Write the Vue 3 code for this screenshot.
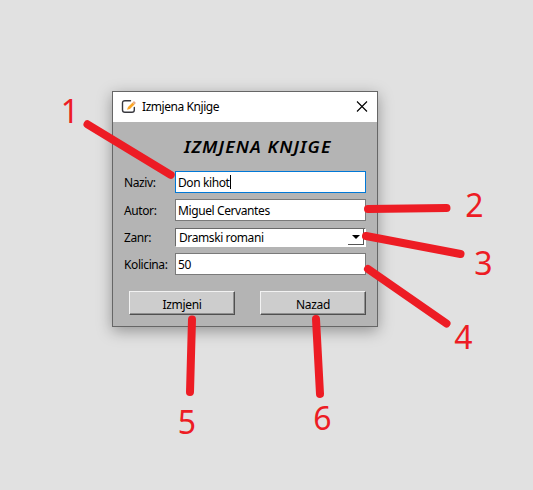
<script setup>
const lines = [
  { n: '1', x1: 87.5, y1: 124.3, x2: 170.7, y2: 174.8, tx: 70, ty: 122.6 },
  { n: '2', x1: 368, y1: 209, x2: 446.5, y2: 208, tx: 474.5, ty: 216.6 },
  { n: '3', x1: 366, y1: 236, x2: 460.5, y2: 254, tx: 483.5, ty: 274.6 },
  { n: '4', x1: 368, y1: 269, x2: 446.5, y2: 323.5, tx: 463.5, ty: 348.6 },
  { n: '5', x1: 192, y1: 319.5, x2: 190, y2: 392, tx: 187, ty: 433.6 },
  { n: '6', x1: 316, y1: 319, x2: 320, y2: 394, tx: 322.5, ty: 429.6 },
]
</script>

<template>
  <main class="desktop">
    <section class="window">
      <header class="titlebar">
        <svg class="app-icon" width="16" height="16" viewBox="0 0 16 16">
          <path d="M9.5 1.7H4Q1.5 1.7 1.5 4V11Q1.5 13.3 4 13.3H11Q13.3 13.3 13.3 11V8.5" fill="none" stroke="#38383e" stroke-width="1.4" stroke-linecap="round" />
          <path d="M6 10.8L7 8.1L11.6 3.5L13.5 5.4L8.9 10Z" fill="#f9a526" />
          <path d="M11.6 3.5L13 2.1L14.9 4L13.5 5.4Z" fill="#e8a987" />
        </svg>
        <span class="caption">Izmjena Knjige</span>
        <svg class="close" width="12" height="12" viewBox="0 0 12 12">
          <path d="M1 .5L11 10.5M11 .5L1 10.5" stroke="#000" stroke-width="1.1" />
        </svg>
      </header>
      <h1 class="heading"><span>IZMJENA KNJIGE</span></h1>
      <div class="form">
        <div class="row">
          <span class="label">Naziv:</span>
          <div class="field active"><span class="value">Don kihot</span><i class="caret"></i></div>
        </div>
        <div class="row">
          <span class="label">Autor:</span>
          <div class="field"><span class="value">Miguel Cervantes</span></div>
        </div>
        <div class="row combo-row">
          <span class="label">Zanr:</span>
          <div class="combo">
            <span class="value">Dramski romani</span>
            <span class="drop">
              <svg width="8" height="4" viewBox="0 0 8 4"><path d="M0 0H8L4 4Z" /></svg>
            </span>
          </div>
        </div>
        <div class="row">
          <span class="label">Kolicina:</span>
          <div class="field"><span class="value">50</span></div>
        </div>
      </div>
      <footer class="actions">
        <button>Izmjeni</button>
        <button>Nazad</button>
      </footer>
    </section>
    <svg class="notes" width="533" height="490" viewBox="0 0 533 490">
      <g v-for="l in lines" :key="l.n">
        <line :x1="l.x1" :y1="l.y1" :x2="l.x2" :y2="l.y2" />
        <text :x="l.tx" :y="l.ty">{{ l.n }}</text>
      </g>
    </svg>
  </main>
</template>

<style>
body {
  background: #e1e1e1;
}
</style>

<style scoped>
.desktop {
  position: relative;
  box-sizing: border-box;
  width: 533px;
  height: 490px;
  padding: 91px 0 0 112px;
  background: #e1e1e1;
  overflow: hidden;
  font-family: "Noto Sans", "Open Sans", sans-serif;
  font-size: 12px;
  letter-spacing: -0.4px;
  color: #000;
}
.window {
  box-sizing: border-box;
  width: 266px;
  height: 236px;
  border: 1px solid #666;
  background: #b4b4b4;
  box-shadow: 0 4px 14px rgba(0, 0, 0, 0.34);
}
.titlebar {
  box-sizing: border-box;
  display: flex;
  align-items: center;
  height: 30px;
  padding: 0 9px 0 8px;
  background: #fff;
}
.caption {
  margin-left: 5px;
  line-height: 16px;
  letter-spacing: -0.44px;
}
.close {
  margin-left: auto;
}
.heading {
  margin: 0;
  height: 49px;
  display: flex;
  align-items: center;
  padding-left: 71px;
  font-size: 16px;
  font-weight: 600;
  font-style: italic;
  line-height: 20px;
  white-space: nowrap;
  letter-spacing: 1px;
}
.heading span {
  transform: scaleX(1.11);
  transform-origin: left center;
}
.form {
  display: flex;
  flex-direction: column;
  padding-left: 11px;
}
.row {
  display: flex;
  align-items: center;
  height: 22px;
  margin-bottom: 6px;
  white-space: nowrap;
}
.combo-row {
  height: 19px;
  margin: 1px 0 6px;
}
.label {
  width: 51px;
  padding-top: 1px;
  line-height: 16px;
}
.value {
  padding-top: 1px;
  line-height: 16px;
}
.field {
  box-sizing: border-box;
  display: flex;
  align-items: center;
  width: 191px;
  height: 22px;
  padding-left: 2px;
  border: 1px solid #7a7a7a;
  background: #fff;
}
.field.active {
  border-color: #0078d7;
}
.caret {
  width: 1px;
  height: 14px;
  margin-left: 0.5px;
  background: #000;
}
.combo {
  box-sizing: border-box;
  display: flex;
  align-items: center;
  justify-content: space-between;
  width: 191px;
  height: 19px;
  padding: 0 1px 1px 3px;
  border: 1px solid #fff;
  border-top-color: #696969;
  border-left-color: #696969;
  background: #fff;
}
.drop {
  box-sizing: border-box;
  display: flex;
  align-items: center;
  justify-content: center;
  width: 16px;
  height: 16px;
  border-right: 1px solid #555;
  border-bottom: 1px solid #555;
}
.actions {
  display: flex;
  gap: 25px;
  padding: 10px 0 0 16px;
}
button {
  box-sizing: border-box;
  width: 106px;
  height: 24px;
  padding: 2px 0 0;
  border: 1px solid #f2f2f2;
  border-right-color: #505050;
  border-bottom-color: #505050;
  box-shadow: inset -1px -1px 0 #8f8f8f;
  background: #cdcdcd;
  font: 12px "Noto Sans", sans-serif;
  letter-spacing: -0.3px;
  color: #000;
}
.notes {
  position: absolute;
  left: 0;
  top: 0;
}
.notes line {
  stroke: #ed1c24;
  stroke-width: 8;
  stroke-linecap: round;
}
.notes text {
  fill: #ed1c24;
  font-family: "Noto Sans", sans-serif;
  font-size: 32px;
  font-weight: 400;
  letter-spacing: 0;
  text-anchor: middle;
}
</style>
